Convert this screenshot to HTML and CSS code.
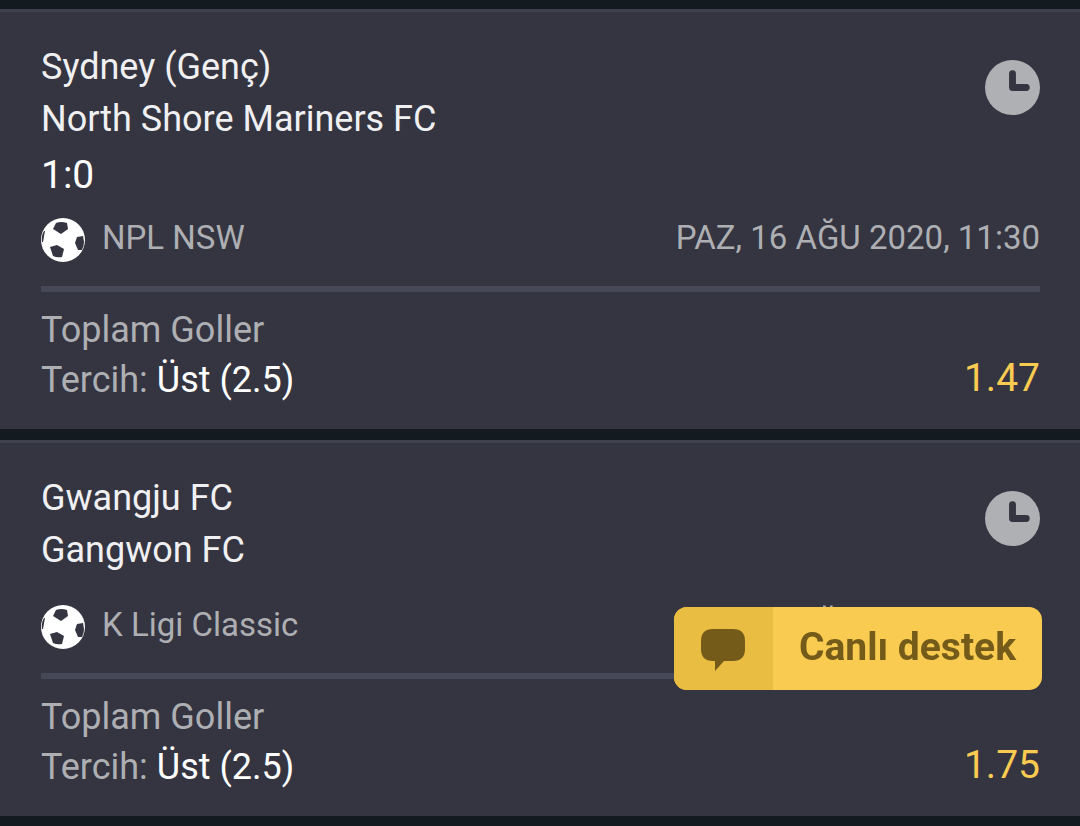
FILE: index.html
```html
<!DOCTYPE html>
<html lang="tr">
<head>
    <meta charset="UTF-8">
    <meta name="viewport" content="width=device-width, initial-scale=1.0">
    <title>Kupon</title>
    <link rel="stylesheet" href="styles.css">
</head>
<body>
    <!-- shared icons -->
    <svg class="sprite" aria-hidden="true">
        <symbol id="ball" viewBox="0 0 44 44">
            <circle cx="22" cy="22" r="22" fill="#ffffff"/>
            <path d="M15 5 Q20 3 26 5 L27 11 L20 16 L12 11 Z"/>
            <path d="M42 18 L36 19 L34 25 L37 32 L41 32 Q43 28 43 24 Z"/>
            <path d="M9 29 L16 27 L23 31 L21 39 Q16 40 12 38 Z"/>
            <path d="M3 13 L4 13 L2 24 L1 24 Q0 18 3 13 Z"/>
        </symbol>
        <symbol id="clock" viewBox="0 0 56 56">
            <circle cx="28" cy="28" r="28" fill="#aeb0b3"/>
            <path d="M28 14 V28 H42" fill="none" stroke="#343541" stroke-width="7" stroke-linecap="round" stroke-linejoin="round"/>
        </symbol>
    </svg>

    <main class="bets">
        <article class="bet">
            <div class="match">
                <div class="teams">
                    <div>Sydney (Genç)</div>
                    <div>North Shore Mariners FC</div>
                </div>
                <svg class="clock"><use href="#clock"/></svg>
            </div>
            <div class="score">1:0</div>
            <div class="info">
                <svg class="ball"><use href="#ball"/></svg>
                <span class="league">NPL NSW</span>
                <time datetime="2020-08-16T11:30">PAZ, 16 AĞU 2020, 11:30</time>
            </div>
            <div class="pick">
                <div>
                    <div>Toplam Goller</div>
                    <div>Tercih: <span class="choice">Üst (2.5)</span></div>
                </div>
                <div class="odds">1.47</div>
            </div>
        </article>

        <article class="bet">
            <div class="match">
                <div class="teams">
                    <div>Gwangju FC</div>
                    <div>Gangwon FC</div>
                </div>
                <svg class="clock"><use href="#clock"/></svg>
            </div>
            <div class="score empty"></div>
            <div class="info">
                <svg class="ball"><use href="#ball"/></svg>
                <span class="league">K Ligi Classic</span>
                <time datetime="2020-08-16T13:00">PAZ, 16 AĞU 2020, 13:00</time>
            </div>
            <div class="pick">
                <div>
                    <div>Toplam Goller</div>
                    <div>Tercih: <span class="choice">Üst (2.5)</span></div>
                </div>
                <div class="odds">1.75</div>
            </div>
        </article>
    </main>

    <button class="support" type="button">
        <span class="support-icon">
            <svg viewBox="0 0 44 42"><path d="M12 0 H32 Q44 0 44 12 V20 Q44 32 32 32 H23 L14 42 V32 H12 Q0 32 0 20 V12 Q0 0 12 0 Z"/></svg>
        </span>
        <span class="support-text">Canlı destek</span>
    </button>
</body>
</html>
```
FILE: styles.css
```css
* {
    box-sizing: border-box;
}
body {
    margin: 0;
    background-color: #131b21;
    color: #aeafb3;
    font-family: Roboto, sans-serif;
    font-size: 36px;
}
.sprite {
    position: absolute;
    width: 0;
    height: 0;
}
.bets {
    display: flex;
    flex-direction: column;
    gap: 11px;
    padding: 9px 0 10px;
}
.bet {
    padding: 29px 40px 24px 41px;
    background-color: #343541;
    border-top: 3px solid #40414e;
}
.match {
    display: flex;
    justify-content: space-between;
}
.teams {
    color: #f0f0f2;
    line-height: 52px;
}
.clock {
    width: 55px;
    height: 55px;
    margin-top: 19px;
}
.score {
    color: #ffffff;
    font-size: 39px;
    line-height: 60px;
}
.score.empty {
    height: 16px;
}
.info {
    display: flex;
    align-items: center;
    height: 69px;
    font-size: 33px;
    line-height: 42px;
}
.league,
.info time {
    padding-bottom: 3px;
}
.ball {
    width: 44px;
    height: 44px;
    fill: #343541;
}
.league {
    margin-left: 17px;
}
.info time {
    margin-left: auto;
}
.pick {
    display: flex;
    justify-content: space-between;
    align-items: flex-end;
    margin-top: 12px;
    padding-top: 13px;
    border-top: 6px solid #464858;
    line-height: 50px;
}
.choice {
    color: #ffffff;
}
.odds {
    color: #f9cb50;
    font-size: 39px;
    line-height: 54px;
}
.support {
    position: fixed;
    right: 38px;
    bottom: 136px;
    display: flex;
    height: 83px;
    padding: 0;
    border: 0;
    border-radius: 13px;
    overflow: hidden;
    background-color: #f9cb50;
    color: #745b19;
    font-family: inherit;
    font-size: 39px;
    font-weight: bold;
    line-height: 80px;
    cursor: pointer;
}
.support-icon {
    display: flex;
    align-items: center;
    justify-content: center;
    width: 99px;
    height: 83px;
    background-color: #e9bc42;
}
.support-icon svg {
    width: 44px;
    height: 42px;
    margin-top: 3px;
    fill: #745b19;
}
.support-text {
    padding: 0 26px;
}
```
